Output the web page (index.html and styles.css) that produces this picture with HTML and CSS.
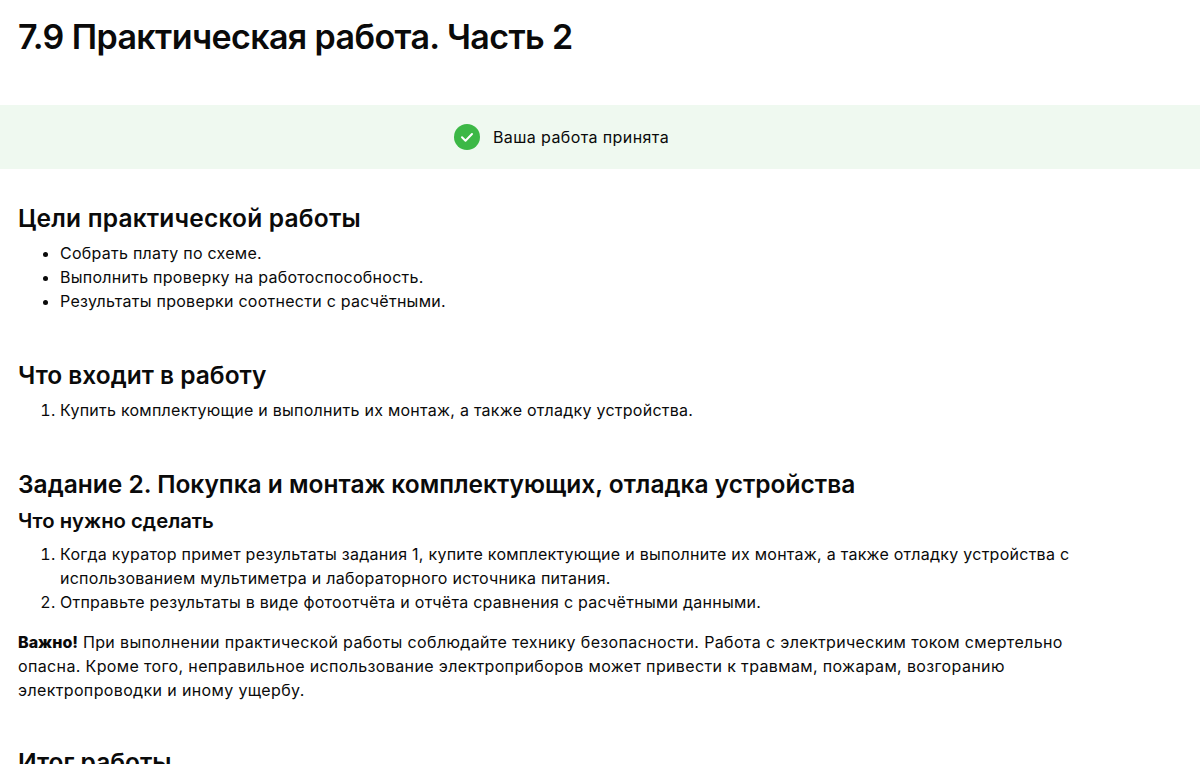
FILE: index.html
```html
<!DOCTYPE html>
<html lang="ru">
<head>
<meta charset="utf-8">
<title>7.9 Практическая работа. Часть 2</title>
<link rel="stylesheet" href="styles.css">
</head>
<body>
<h1 class="title">7.9 Практическая работа. Часть 2</h1>
<div class="status">
  <svg class="status-icon" viewBox="0 0 26 26" width="26" height="26"><circle cx="13" cy="13" r="13" fill="#3cb846"/><path d="M8 13.2l3.5 3.5L18 10" fill="none" stroke="#fff" stroke-width="2" stroke-linecap="round" stroke-linejoin="round"/></svg>
  <span>Ваша работа принята</span>
</div>
<main class="content">
  <h2 class="first">Цели практической работы</h2>
  <ul>
    <li>Собрать плату по схеме.</li>
    <li>Выполнить проверку на работоспособность.</li>
    <li>Результаты проверки соотнести с расчётными.</li>
  </ul>
  <h2>Что входит в работу</h2>
  <ol>
    <li>Купить комплектующие и выполнить их монтаж, а также отладку устройства.</li>
  </ol>
  <h2>Задание 2. Покупка и монтаж комплектующих, отладка устройства</h2>
  <h3>Что нужно сделать</h3>
  <ol>
    <li>Когда куратор примет результаты задания 1, купите комплектующие и выполните их монтаж, а также отладку устройства с использованием мультиметра и лабораторного источника питания.</li>
    <li>Отправьте результаты в виде фотоотчёта и отчёта сравнения с расчётными данными.</li>
  </ol>
  <p><b>Важно!</b> При выполнении практической работы соблюдайте технику безопасности. Работа с электрическим током смертельно опасна. Кроме того, неправильное использование электроприборов может привести к травмам, пожарам, возгоранию электропроводки и иному ущербу.</p>
  <h2 class="after-text">Итог работы</h2>
</main>
</body>
</html>
```
FILE: styles.css
```css
html, body { margin: 0; padding: 0; height: 764px; overflow: hidden; background: #fff; }
body { font-family: Inter, "Noto Sans", sans-serif; color: #0a0a0a; font-size: 16px; line-height: 24px; letter-spacing: 0.26px; }
.title { margin: 0; padding: 14px 18px 0; font-size: 34px; line-height: 46px; font-weight: 600; letter-spacing: -0.6px; height: 105px; box-sizing: border-box; }
.status { height: 64px; background: #eff9f0; display: flex; align-items: center; justify-content: center; gap: 13px; padding-right: 77px; letter-spacing: 0.4px; }
.content { padding: 0 18px; max-width: 1060px; }
h2 { font-size: 24.5px; line-height: 32px; font-weight: 600; letter-spacing: 0; margin: 46px 0 7px; }
h2.first { margin-top: 33px; letter-spacing: 0.2px; }
h2.after-text { margin-top: 44px; }
h3 { font-size: 20.3px; line-height: 28px; font-weight: 600; letter-spacing: 0; margin: 0 0 7px; }
ul, ol { margin: 0; padding-left: 42px; }
p { margin: 16px 0 0; letter-spacing: 0.36px; }
b { font-weight: 800; letter-spacing: 0; }
```
